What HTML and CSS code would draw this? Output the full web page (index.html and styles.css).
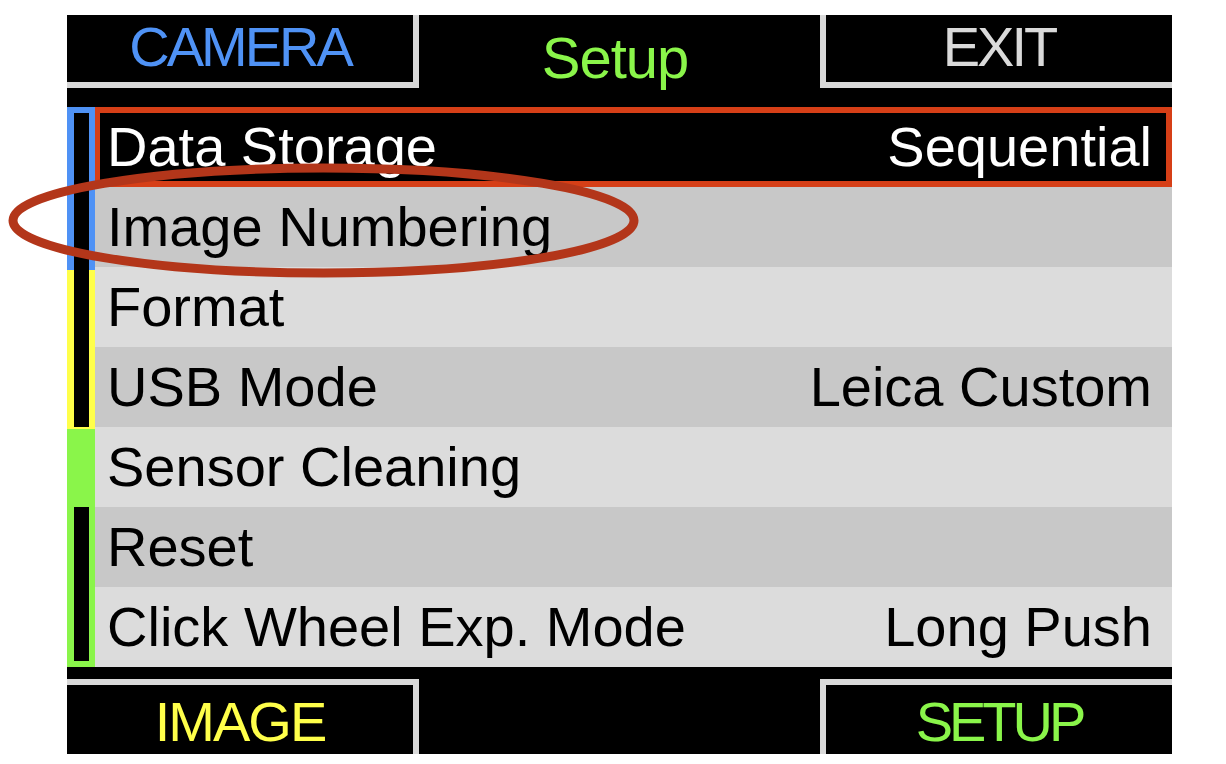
FILE: index.html
```html
<!DOCTYPE html>
<html>
<head>
<meta charset="utf-8">
<link rel="stylesheet" href="styles.css">
</head>
<body>
<div class="screen">
  <div class="topbar">
    <div class="tab tab-left"><span class="lbl lbl-camera">CAMERA</span></div>
    <div class="title">Setup</div>
    <div class="tab tab-right"><span class="lbl lbl-exit">EXIT</span></div>
  </div>
  <div class="main">
    <div class="scroll">
      <div class="track track-a"></div>
      <div class="thumb"></div>
      <div class="track track-b"></div>
    </div>
    <div class="list">
      <div class="row sel"><span>Data Storage</span><span>Sequential</span></div>
      <div class="row dark"><span>Image Numbering</span></div>
      <div class="row light"><span>Format</span></div>
      <div class="row dark"><span>USB Mode</span><span>Leica Custom</span></div>
      <div class="row light"><span>Sensor Cleaning</span></div>
      <div class="row dark"><span>Reset</span></div>
      <div class="row light"><span>Click Wheel Exp. Mode</span><span>Long Push</span></div>
    </div>
  </div>
  <div class="bottombar">
    <div class="btab btab-left"><span class="lbl lbl-image">IMAGE</span></div>
    <div class="bspacer"></div>
    <div class="btab btab-right"><span class="lbl lbl-setup">SETUP</span></div>
  </div>
</div>
<svg class="mark" width="1226" height="764" viewBox="0 0 1226 764">
  <ellipse cx="323.5" cy="220.5" rx="310.5" ry="52.5" fill="none" stroke="#b3361a" stroke-width="9"/>
</svg>
</body>
</html>
```
FILE: styles.css
```css
* { box-sizing: border-box; }
html, body {
  margin: 0;
  padding: 0;
  background: #ffffff;
}
body {
  width: 1226px;
  height: 764px;
  overflow: hidden;
  position: relative;
  font-family: "Liberation Sans", Arial, sans-serif;
  font-size: 56px;
}
.screen {
  margin: 15px 0 0 67px;
  width: 1105px;
  height: 739px;
  background: #000;
  display: flex;
  flex-direction: column;
}
.topbar {
  height: 73px;
  display: flex;
  align-items: flex-start;
  flex: none;
}
.tab {
  width: 352px;
  height: 73px;
  border-bottom: 6px solid #d9d9d9;
  text-align: center;
  line-height: 64px;
}
.tab-left { border-right: 6px solid #d9d9d9; }
.tab-right { border-left: 6px solid #d9d9d9; }
.title {
  flex: 1;
  text-align: center;
  color: #8af54a;
  font-size: 58px;
  line-height: 61px;
  padding-top: 12px;
  padding-right: 9px;
  letter-spacing: -1px;
}
.lbl { white-space: nowrap; }
.lbl-camera { color: #4f92f5; letter-spacing: -3px; }
.lbl-exit { color: #dadada; letter-spacing: -3px; }
.lbl-image { color: #ffff4a; letter-spacing: -2px; }
.lbl-setup { color: #8af54a; letter-spacing: -4px; }

.main {
  margin-top: 19px;
  height: 560px;
  display: flex;
  flex: none;
}
.scroll {
  width: 28px;
  height: 560px;
  padding: 6px 6px 6px 7px;
  background: linear-gradient(to bottom, #4f92f5 0 163px, #ffff4a 163px 322px, #8af54a 322px);
  display: flex;
  flex-direction: column;
}
.track { background: #000; }
.track-a { height: 314px; }
.thumb { height: 80px; }
.track-b { height: 154px; }

.list {
  flex: 1;
  display: flex;
  flex-direction: column;
}
.row {
  height: 80px;
  border: 6px solid transparent;
  border-left-width: 5px;
  padding: 3px 14px 0 7px;
  display: flex;
  justify-content: space-between;
  align-items: flex-start;
  line-height: 62px;
  color: #000;
  white-space: nowrap;
}
.row.sel {
  background: #000;
  border-color: #d63f17;
  color: #fff;
}
.row.dark { background: #c8c8c8; }
.row.light { background: #dcdcdc; }

.bottombar {
  margin-top: 12px;
  height: 75px;
  display: flex;
  flex: none;
}
.btab {
  width: 352px;
  height: 75px;
  border-top: 6px solid #d9d9d9;
  text-align: center;
  line-height: 60px;
  padding-top: 7px;
}
.btab-left { border-right: 6px solid #d9d9d9; }
.btab-right { border-left: 6px solid #d9d9d9; }
.bspacer { flex: 1; }

.mark {
  position: absolute;
  left: 0;
  top: 0;
  pointer-events: none;
}
```
